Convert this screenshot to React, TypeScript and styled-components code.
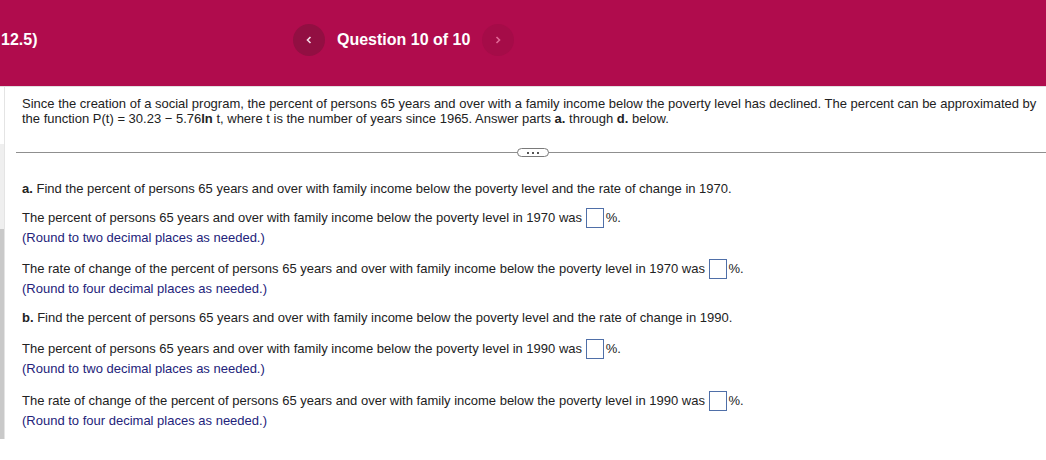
import React, { FC } from 'react';
import styled, { createGlobalStyle } from 'styled-components';

const GlobalStyle = createGlobalStyle`
  html, body {
    margin: 0;
    padding: 0;
    background: #fff;
  }
  body {
    font-family: "Liberation Sans", Arial, sans-serif;
    color: #222;
    overflow: hidden;
  }
`;

const Header = styled.header`
  height: 87px;
  box-sizing: border-box;
  padding-top: 24px;
  background: #b00c4d;
  display: flex;
  align-items: flex-start;
  border-bottom: 1px solid #e2dfe0;
`;

const Chapter = styled.div`
  width: 293px;
  padding-left: 1px;
  color: #fff;
  font-weight: bold;
  font-size: 16px;
  line-height: 32px;
  box-sizing: border-box;
`;

const Nav = styled.nav`
  display: flex;
  align-items: center;
  gap: 12px;
`;

const NavButton = styled.div<{ $dim?: boolean }>`
  width: 32px;
  height: 32px;
  border-radius: 50%;
  display: flex;
  align-items: center;
  justify-content: center;
  background: ${(p) => (p.$dim ? '#a50c48' : '#920f42')};
  color: ${(p) => (p.$dim ? '#e26a98' : '#f4dbe5')};
`;

const QuestionLabel = styled.div`
  color: #fff;
  font-weight: bold;
  font-size: 16px;
  white-space: nowrap;
`;

const Body = styled.div`
  display: flex;
`;

const ScrollTrack = styled.div`
  width: 5px;
  display: flex;
  flex-direction: column;
  flex-shrink: 0;
`;

const TrackPart = styled.div<{ $h: number; $bg: string }>`
  height: ${(p) => p.$h}px;
  background: ${(p) => p.$bg};
  border-right: 1px solid #e4e4e4;
`;

const Content = styled.main`
  flex: 1;
  padding: 9px 0 0 11px;
  font-size: 13px;
`;

const Intro = styled.p`
  margin: 0 0 0 6px;
  line-height: 15px;
  padding-right: 4px;
`;

const Divider = styled.div`
  position: relative;
  margin: 26px 0 0 0;
  height: 1px;
  background: #8f8f8f;
`;

const Pill = styled.div`
  position: absolute;
  left: 501px;
  top: -4px;
  width: 30px;
  height: 7px;
  border: 1px solid #7a7a7a;
  border-radius: 5px;
  background: #fff;
  display: flex;
  align-items: center;
  justify-content: center;
  gap: 3px;
`;

const Dot = styled.span`
  width: 2px;
  height: 2px;
  background: #555;
`;

const Parts = styled.section`
  padding: 26px 0 0 6px;
`;

const Line = styled.div<{ $mt?: number }>`
  line-height: 20px;
  height: 20px;
  margin-top: ${(p) => p.$mt ?? 0}px;
  white-space: nowrap;
`;

const Hint = styled(Line)`
  color: #23237a;
`;

const AnswerBox = styled.span`
  display: inline-block;
  width: 16px;
  height: 18px;
  border: 1px solid #4f6fa8;
  margin: 0 2px 0 0;
  vertical-align: middle;
  position: relative;
  top: -1px;
`;

type AnswerProps = { text: string; mt: number };

const Answer: FC<AnswerProps> = ({ text, mt }) => (
  <Line $mt={mt}>
    {text}
    {' '}
    <AnswerBox />
    %.
  </Line>
);

const Chevron: FC<{ dir: 'left' | 'right' }> = ({ dir }) => (
  <svg width="8" height="10" viewBox="0 0 8 10">
    <path
      d={dir === 'left' ? 'M5.5 2 L2.5 5 L5.5 8' : 'M2.5 2 L5.5 5 L2.5 8'}
      fill="none"
      stroke="currentColor"
      strokeWidth="1.6"
    />
  </svg>
);

const App: FC = () => (
  <>
    <GlobalStyle />
    <Header>
      <Chapter>12.5)</Chapter>
      <Nav>
        <NavButton>
          <Chevron dir="left" />
        </NavButton>
        <QuestionLabel>Question 10 of 10</QuestionLabel>
        <NavButton $dim>
          <Chevron dir="right" />
        </NavButton>
      </Nav>
    </Header>
    <Body>
      <ScrollTrack>
        <TrackPart $h={57} $bg="#ffffff" />
        <TrackPart $h={85} $bg="#efefef" />
        <TrackPart $h={210} $bg="#c9c9c9" />
      </ScrollTrack>
      <Content>
        <Intro>
          Since the creation of a social program, the percent of persons 65 years and over with a family income below the poverty level has declined. The percent can be approximated by the function P(t) = 30.23 − 5.76
          <b>ln</b>
          {' t, where t is the number of years since 1965. Answer parts '}
          <b>a.</b>
          {' through '}
          <b>d.</b>
          {' below.'}
        </Intro>
        <Divider>
          <Pill>
            <Dot />
            <Dot />
            <Dot />
          </Pill>
        </Divider>
        <Parts>
          <Line>
            <b>a.</b>
            {' Find the percent of persons 65 years and over with family income below the poverty level and the rate of change in 1970.'}
          </Line>
          <Answer mt={9} text="The percent of persons 65 years and over with family income below the poverty level in 1970 was" />
          <Hint>(Round to two decimal places as needed.)</Hint>
          <Answer mt={11} text="The rate of change of the percent of persons 65 years and over with family income below the poverty level in 1970 was" />
          <Hint>(Round to four decimal places as needed.)</Hint>
          <Line $mt={9}>
            <b>b.</b>
            {' Find the percent of persons 65 years and over with family income below the poverty level and the rate of change in 1990.'}
          </Line>
          <Answer mt={11} text="The percent of persons 65 years and over with family income below the poverty level in 1990 was" />
          <Hint>(Round to two decimal places as needed.)</Hint>
          <Answer mt={12} text="The rate of change of the percent of persons 65 years and over with family income below the poverty level in 1990 was" />
          <Hint>(Round to four decimal places as needed.)</Hint>
        </Parts>
      </Content>
    </Body>
  </>
);

export default App;
